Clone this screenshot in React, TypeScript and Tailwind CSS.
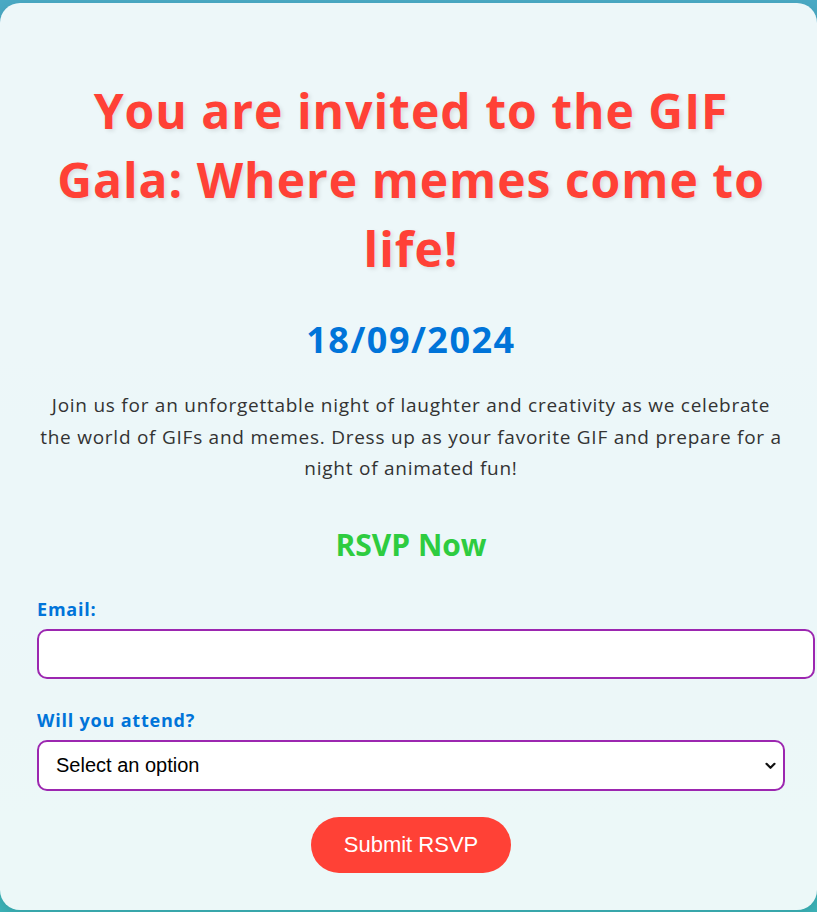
import React from 'react';

const comic = { fontFamily: '"Comic Sans MS", "Open Sans", sans-serif' };

export default function App() {
  return (
    <div className="min-h-[912px] bg-gradient-to-b from-[#4aa9c4] to-[#3cb3b8] pt-[3px] pb-[2px]">
      <div
        className="w-full rounded-[20px] bg-[rgba(255,255,255,0.9)] pl-[37px] pr-[32px] pt-[73px] pb-[37px] shadow-[0_4px_12px_rgba(0,0,0,0.1)]"
        style={comic}
      >
        <h1 className="text-center text-[48px] font-bold leading-[69px] tracking-[1px] text-[#FF4136] [text-shadow:2px_2px_4px_rgba(0,0,0,0.1)]">
          You are invited to the GIF Gala: Where memes come to life!
        </h1>

        <h2 className="mt-[32px] text-center text-[36px] font-bold leading-[50px] tracking-[1.5px] text-[#0074D9]">
          18/09/2024
        </h2>

        <p className="mt-[25px] text-center text-[19px] leading-[31.5px] tracking-[0.75px] text-[#333]">
          Join us for an unforgettable night of laughter and creativity as we celebrate the world of GIFs and memes.
          Dress up as your favorite GIF and prepare for a night of animated fun!
        </p>

        <h2 className="mt-[38px] text-center text-[30px] font-bold leading-[44px] text-[#2ECC40]">RSVP Now</h2>

        <form className="mt-[29px]" onSubmit={(e) => e.preventDefault()}>
          <label htmlFor="email" className="block text-[18px] font-bold leading-[26px] tracking-[0.8px] text-[#0074D9]">
            Email:
          </label>
          <input
            id="email"
            type="email"
            className="mt-[7px] block h-[50px] w-[calc(100%+30px)] rounded-[10px] border-2 border-[#9C27B0] bg-white px-[13px] text-[20px] outline-none"
          />

          <label htmlFor="attend" className="mt-[28px] block text-[18px] font-bold leading-[26px] tracking-[0.8px] text-[#0074D9]">
            Will you attend?
          </label>
          <div className="relative mt-[7px]">
            <select
              id="attend"
              defaultValue=""
              className="block h-[51px] w-full appearance-none rounded-[10px] border-2 border-[#9C27B0] bg-white pl-[17px] text-[20px] text-black outline-none"
              style={{ fontFamily: '"Liberation Sans", Arial, sans-serif' }}
            >
              <option value="">Select an option</option>
              <option value="yes">Yes, I'll be there!</option>
              <option value="no">Sorry, can't make it</option>
            </select>
            <svg
              className="pointer-events-none absolute right-[9px] top-[22px]"
              width="11"
              height="8"
              viewBox="0 0 11 8"
              fill="none"
            >
              <path d="M1.5 1.8 L5.5 5.8 L9.5 1.8" stroke="#111" strokeWidth="2.2" strokeLinecap="round" strokeLinejoin="round" />
            </svg>
          </div>

          <div className="mt-[26px] flex justify-center">
            <button
              type="submit"
              className="h-[56px] w-[200px] rounded-full bg-[#FF4136] text-[22px] text-white"
              style={{ fontFamily: '"Liberation Sans", Arial, sans-serif' }}
            >
              Submit RSVP
            </button>
          </div>
        </form>
      </div>
    </div>
  );
}
